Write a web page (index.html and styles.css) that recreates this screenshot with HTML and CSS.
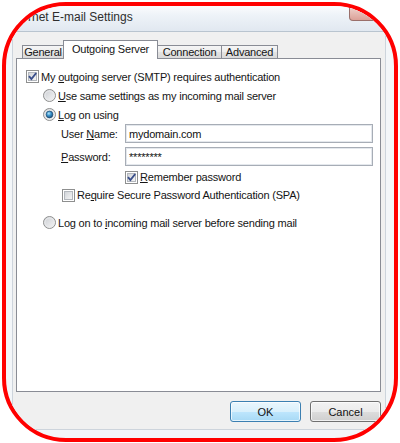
FILE: index.html
```html
<!DOCTYPE html>
<html lang="en">
<head>
<meta charset="utf-8">
<title>Internet E-mail Settings</title>
<link rel="stylesheet" href="styles.css">
</head>
<body>
<svg class="defs" aria-hidden="true">
  <defs>
    <linearGradient id="cbFill" x1="0" y1="0" x2="1" y2="1">
      <stop offset="0" stop-color="#cfd2d7"/>
      <stop offset="1" stop-color="#f7f7f7"/>
    </linearGradient>
    <linearGradient id="rbFill" x1="0" y1="0" x2="1" y2="1">
      <stop offset="0" stop-color="#c9ccd1"/>
      <stop offset="1" stop-color="#f8f8f8"/>
    </linearGradient>
    <radialGradient id="dot" cx="0.4" cy="0.35" r="0.7">
      <stop offset="0" stop-color="#b6e6fb"/>
      <stop offset="0.45" stop-color="#3b94cc"/>
      <stop offset="1" stop-color="#1a4a78"/>
    </radialGradient>
    <symbol id="box" viewBox="0 0 13 13">
      <rect x="0.5" y="0.5" width="12" height="12" fill="#fff" stroke="#8e8f8f"/>
      <rect x="2.5" y="2.5" width="8" height="8" fill="url(#cbFill)" stroke="#b3b7bd"/>
    </symbol>
    <symbol id="tick" viewBox="0 0 13 13">
      <path d="M3 6.2 L5.4 9 L10.2 3" fill="none" stroke="#3a4f8b" stroke-width="1.9"/>
    </symbol>
    <symbol id="ring" viewBox="0 0 13 13">
      <circle cx="6.5" cy="6.5" r="6" fill="url(#rbFill)" stroke="#8e8f8f"/>
      <circle cx="6.5" cy="6.5" r="4.6" fill="none" stroke="#e9eaec"/>
    </symbol>
    <symbol id="pip" viewBox="0 0 13 13">
      <circle cx="6.5" cy="6.5" r="3.4" fill="url(#dot)" stroke="#174266" stroke-width="0.6"/>
    </symbol>
  </defs>
</svg>

<div class="frame">
  <div class="titlebar">
    <span class="title">rnet E-mail Settings</span>
    <span class="close"></span>
  </div>

  <div class="client">
    <div class="tabs">
      <div class="tab tab-general">General</div>
      <div class="tab tab-outgoing active">Outgoing Server</div>
      <div class="tab tab-connection">Connection</div>
      <div class="tab tab-advanced">Advanced</div>
    </div>

    <div class="panel">
      <div class="row">
        <svg class="ctl"><use href="#box"/><use href="#tick"/></svg>
        <span>My <u>o</u>utgoing server (SMTP) requires authentication</span>
      </div>
      <div class="row indent">
        <svg class="ctl"><use href="#ring"/></svg>
        <span><u>U</u>se same settings as my incoming mail server</span>
      </div>
      <div class="row indent">
        <svg class="ctl"><use href="#ring"/><use href="#pip"/></svg>
        <span><u>L</u>og on using</span>
      </div>

      <div class="login">
        <div class="field">
          <label class="lbl">User <u>N</u>ame:</label>
          <div class="input">mydomain.com</div>
        </div>
        <div class="field field-pw">
          <label class="lbl"><u>P</u>assword:</label>
          <div class="input">********</div>
        </div>
        <div class="row small remember">
          <svg class="ctl"><use href="#box"/><use href="#tick"/></svg>
          <span><u>R</u>emember password</span>
        </div>
        <div class="row small spa">
          <svg class="ctl"><use href="#box"/></svg>
          <span>Re<u>q</u>uire Secure Password Authentication (SPA)</span>
        </div>
      </div>

      <div class="row indent last">
        <svg class="ctl"><use href="#ring"/></svg>
        <span>Log on to <u>i</u>ncoming mail server before sending mail</span>
      </div>
    </div>

    <div class="buttons">
      <button class="btn default">OK</button>
      <button class="btn">Cancel</button>
    </div>
  </div>
</div>
</body>
</html>
```
FILE: styles.css
```css
* { box-sizing: border-box; }

html, body {
  margin: 0;
  padding: 0;
  width: 400px;
  height: 443px;
  overflow: hidden;
  background: #ffffff;
}

body {
  font-family: "Liberation Sans", Arial, sans-serif;
  font-size: 11px;
  letter-spacing: -0.2px;
  color: #151515;
}

.defs {
  display: block;
  width: 0;
  height: 0;
  overflow: hidden;
}

.frame {
  margin: 2px 0 0 2px;
  width: 396px;
  height: 440px;
  border: 4px solid #ff0000;
  border-radius: 64px;
  overflow: hidden;
  background: #f3f6f9;
  display: flex;
  flex-direction: column;
}

/* title bar */
.titlebar {
  position: relative;
  flex: none;
  height: 26px;
  display: flex;
  align-items: center;
  padding: 0 0 3px 22px;
  background: linear-gradient(#fbfcfe 0%, #eef3f8 35%, #e1e8f0 100%);
  border-bottom: 1px solid #b9c4cf;
}

.title {
  font-size: 12px;
  letter-spacing: 0;
  color: #2e2e2e;
}

.close {
  position: absolute;
  top: 0;
  left: 343px;
  width: 46px;
  height: 15px;
  border: 1px solid #9a6f6a;
  border-top: none;
  border-radius: 0 0 4px 4px;
  background: linear-gradient(#f0d6d0, #dba198);
}

/* client area */
.client {
  flex: 1;
  margin: 0 8px 8px 6px;
  padding: 8px 4px 0 3px;
  background: #f0f0f0;
  border: 1px solid #cdd4dc;
  border-top: none;
  display: flex;
  flex-direction: column;
}

.tabs {
  position: relative;
  z-index: 1;
  height: 18px;
  display: flex;
  align-items: flex-end;
  padding-left: 6px;
}

.tab {
  height: 13px;
  margin-left: -1px;
  border: 1px solid #898c95;
  border-bottom: none;
  background: linear-gradient(#f5f5f5 0%, #ededed 50%, #e3e3e3 51%, #dadada 100%);
  display: flex;
  align-items: center;
  justify-content: center;
  line-height: 1;
  white-space: nowrap;
}

.tab-general { margin-left: 0; width: 42px; }
.tab-outgoing { width: 95px; }
.tab-connection { width: 65px; }
.tab-advanced { width: 57px; }

.tab.active {
  height: 19px;
  margin-bottom: -1px;
  background: #ffffff;
  padding-bottom: 2px;
}

.panel {
  height: 334px;
  background: #ffffff;
  border: 1px solid #898c95;
  padding: 8px 0 0 9px;
}

.row {
  display: flex;
  align-items: center;
  height: 19px;
  white-space: nowrap;
}

.row.small { height: 18px; }

.ctl {
  flex: none;
  width: 13px;
  height: 13px;
  margin-right: 2px;
}

.indent { margin-left: 17px; }

.login { margin-left: 35px; }

.field {
  display: flex;
  align-items: center;
  height: 19px;
}

.field-pw { margin-top: 4px; }

.lbl {
  width: 64px;
  flex: none;
}

.input {
  width: 248px;
  height: 19px;
  border: 1px solid #a7adb6;
  box-shadow: inset 0 0 0 1px #e4e8ed;
  background: #ffffff;
  padding: 0 0 0 3px;
  display: flex;
  align-items: center;
  color: #111;
}

.remember {
  margin-top: 2px;
  margin-left: 64px;
}

.spa { margin-left: 1px; }

.row.last { margin-top: 9px; }

/* buttons */
.buttons {
  display: flex;
  justify-content: flex-end;
  gap: 9px;
  margin-top: 9px;
}

.btn {
  width: 71px;
  height: 21px;
  padding: 0;
  font: inherit;
  color: #111;
  border: 1px solid #707070;
  border-radius: 3px;
  background: linear-gradient(#f2f2f2 0%, #ebebeb 50%, #dddddd 51%, #cfcfcf 100%);
  box-shadow: inset 0 0 0 1px rgba(255, 255, 255, 0.7);
}

.btn.default {
  border-color: #3c7fb1;
  background: linear-gradient(#eaf6fd 0%, #d9f0fc 50%, #bee6fd 51%, #a7d9f5 100%);
}
```
